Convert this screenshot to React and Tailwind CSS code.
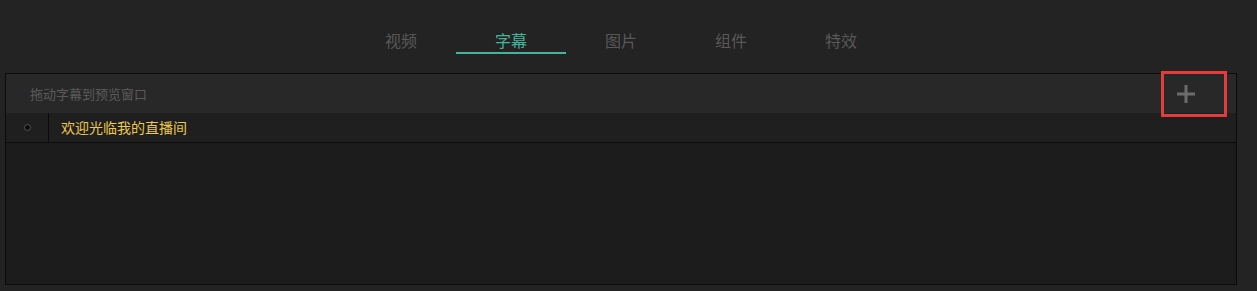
import React from "react";

const tabs = ["视频", "字幕", "图片", "组件", "特效"];

export default function App() {
  return (
    <div
      className="w-[1257px] h-[291px] bg-[#232323] pl-[5px] pr-[20px] pt-[28px] overflow-hidden"
      style={{ fontFamily: '"Noto Sans CJK SC", "Noto Sans", sans-serif' }}
    >
      <div className="flex justify-center">
        {tabs.map((t, i) => (
          <div key={t} className="w-[110px] flex flex-col items-center">
            <div
              className={`h-[24px] leading-[24px] text-[16px] ${
                i === 1 ? "text-[#45b49c]" : "text-[#585858]"
              }`}
            >
              {t}
            </div>
            <div className={`h-[2px] w-full ${i === 1 ? "bg-[#45b49c]" : ""}`} />
          </div>
        ))}
      </div>
      <div className="mt-[19px] h-[212px] border border-[#0b0b0b] bg-[#1c1c1c] flex flex-col">
        <div className="h-[39px] bg-[#282828] flex items-center justify-between pl-[24px]">
          <span className="text-[13px] text-[#5a5a5a]">拖动字幕到预览窗口</span>
          <div className="relative mr-[9px] w-[66px] h-[46px] border-[3px] border-[#e23c3c] flex items-center justify-start pl-[13px]">
            <svg width="18" height="18" viewBox="0 0 18 18">
              <path d="M9 0v18M0 9h18" stroke="#6c6c6c" strokeWidth="3" />
            </svg>
          </div>
        </div>
        <div className="h-[30px] bg-[#1f1f1f] border-b border-[#0b0b0b] flex items-stretch">
          <div className="w-[43px] flex items-center justify-center border-r border-[#0b0b0b]">
            <div className="w-[7px] h-[7px] rounded-full bg-[#0a0a0a] border border-[#555]" />
          </div>
          <div className="flex items-center pl-[12px] text-[14px] text-[#ecc94b]">欢迎光临我的直播间</div>
        </div>
        <div className="flex-1" />
      </div>
    </div>
  );
}
